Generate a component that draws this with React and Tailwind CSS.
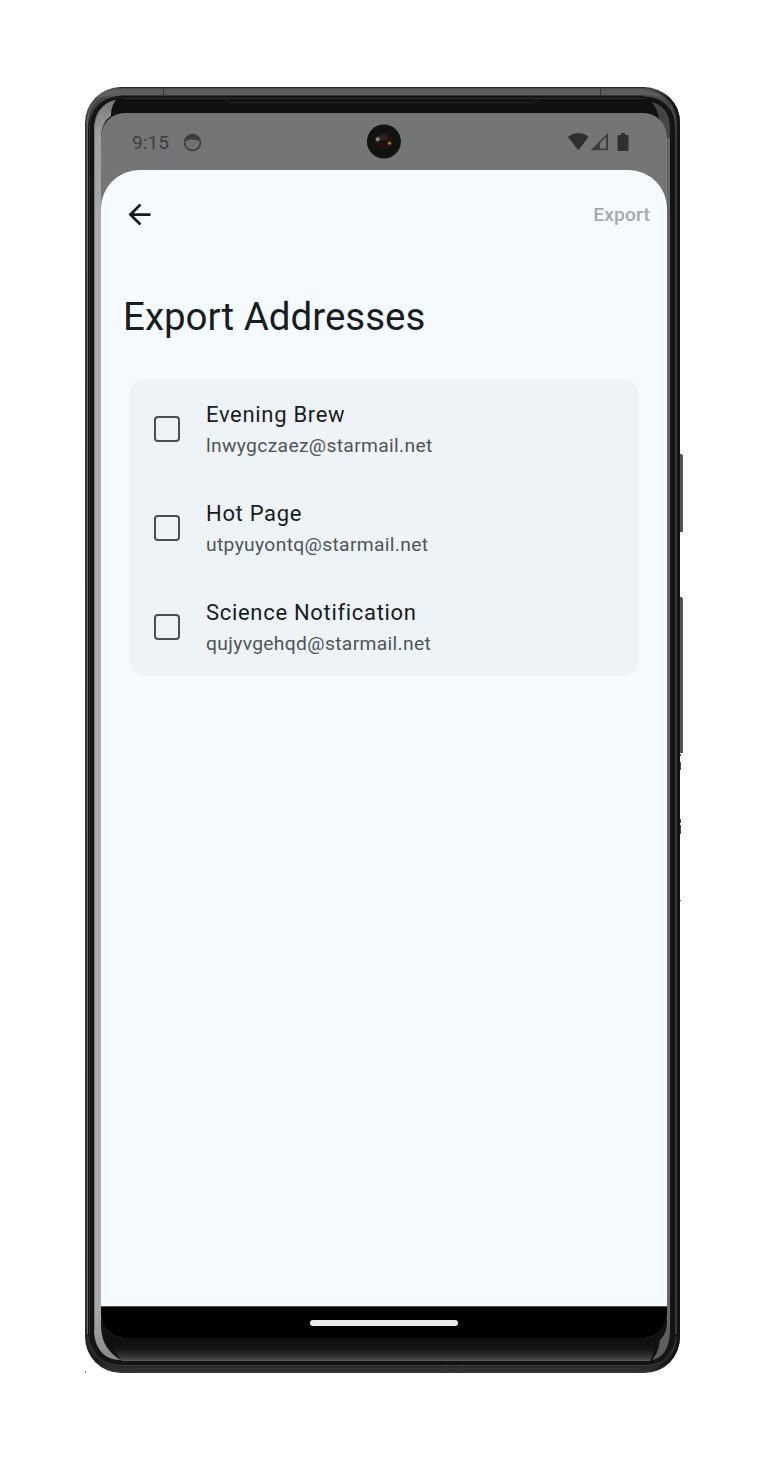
import React from 'react';

const addresses = [
  { name: 'Evening Brew', email: 'lnwygczaez@starmail.net' },
  { name: 'Hot Page', email: 'utpyuyontq@starmail.net' },
  { name: 'Science Notification', email: 'qujyvgehqd@starmail.net' },
];

function DeviceFrame() {
  return (
    <svg className="absolute inset-0" width="771" height="1464" viewBox="0 0 771 1464" fill="none" aria-hidden="true">
      <defs>
        <linearGradient id="rim" x1="0" y1="87" x2="0" y2="1373" gradientUnits="userSpaceOnUse">
          <stop offset="0" stopColor="#1b1b1b" />
          <stop offset="0.0016" stopColor="#5a5a5a" />
          <stop offset="0.006" stopColor="#5e5e5e" />
          <stop offset="0.009" stopColor="#484848" />
          <stop offset="0.03" stopColor="#3a3a3a" />
          <stop offset="0.96" stopColor="#303030" />
          <stop offset="0.99" stopColor="#1c1c1c" />
          <stop offset="1" stopColor="#353535" />
        </linearGradient>
        <linearGradient id="edge" x1="644" y1="0" x2="676" y2="0" gradientUnits="userSpaceOnUse">
          <stop offset="0" stopColor="#141414" stopOpacity="0" />
          <stop offset="1" stopColor="#141414" />
        </linearGradient>
        <linearGradient id="chin" x1="0" y1="1338" x2="0" y2="1361" gradientUnits="userSpaceOnUse">
          <stop offset="0" stopColor="#0d0d0d" />
          <stop offset="0.5" stopColor="#171717" />
          <stop offset="0.88" stopColor="#3b3b3b" />
          <stop offset="1" stopColor="#606060" />
        </linearGradient>
        <linearGradient id="shine" x1="0" y1="98" x2="0" y2="1361" gradientUnits="userSpaceOnUse">
          <stop offset="0" stopColor="#767676" />
          <stop offset="0.03" stopColor="#a0a0a0" />
          <stop offset="0.1" stopColor="#a9a9a9" />
          <stop offset="0.96" stopColor="#a9a9a9" />
          <stop offset="1" stopColor="#888" />
        </linearGradient>
      </defs>

      {/* Side buttons */}
      <path d="M679 454h3v78h-3zM679 597h3v156h-3z" fill="#555" />
      <path d="M682.3 455v77M682.3 598v155" stroke="#353535" />
      <path d="M680.5 754v2M680.5 762v8M680.5 819v4M680.5 825v9M680.5 900v1" stroke="#484848" />

      {/* Metal rim */}
      <rect x="85" y="87" width="595" height="1286" rx="36" fill="url(#rim)" />
      <path d="M644 1371.500c20 0 34.500-15 34.500-36V123c0-20-14-33-34.500-34" stroke="url(#edge)" strokeWidth="3" />
      <rect x="88" y="95.500" width="589" height="1269.500" rx="34" fill="#141414" />
      <path d="M87.500 1334V123c0-20 13-30 31-32" stroke="#6c6c6c" />
      <path d="M89.500 1334V128c0-20 12-31 31-31" stroke="#2c2c2c" />
      <path d="M676 1334V128c0-20-12-32-31-32" stroke="#484848" strokeWidth="1.500" />
      <path d="M88 1337c2 17 14 28.500 32 28.500h526c18 0 28-10 30-28" stroke="#3a3a3a" />
      <path d="M125 1368.500h514M130 1371.500h504" stroke="#343434" />
      <path d="M163.500 88v8M600.500 88v8M446.500 1364v8M462.500 1364v8" stroke="#353535" />

      {/* Reflective glass edge */}
      <rect x="94" y="98" width="576" height="1263" rx="30" fill="#111" />
      <path d="M101 140V1325c0 18 8 28 20 35-18 0-27-13-27-31V131c0-18 8-28 22-31-4 5-5 10-5 16-6 4-10 11-10 22z" fill="url(#shine)" />
      <path d="M94.500 1330V131c0-18 8-27 20-30.500" stroke="#777" />
      <path d="M667 1315v8c-1 10-3 13-7 17-1 9-4 16-8 20 12-2 18-14 18-30v-15z" fill="#5e5e5e" />
      <path d="M667 150v-12c-1-9-3-14-8-18-1-9-3-13-8-18 13 3 19 11 19 27v21z" fill="#454545" />
      <path d="M667 138h3v1188h-3z" fill="#666" />
      <path d="M118 1338h530c3 0 6-1 9-3-1 10-3 18-7 26H122c-7-8-11-16-12-27z" fill="url(#chin)" />
      <path d="M123 98.500h522" stroke="#303030" />
      <path d="M225 99.500l6 3h301l6-3" stroke="#282828" />
      <path d="M85.500 1371v2" stroke="#888" />
    </svg>
  );
}

function Camera() {
  return (
    <svg className="absolute left-[265px] top-[11px]" width="36" height="36" viewBox="0 0 36 36" aria-hidden="true">
      <defs>
        <radialGradient id="lens">
          <stop offset="0" stopColor="#150b0b" />
          <stop offset="0.65" stopColor="#24140f" />
          <stop offset="1" stopColor="#111311" />
        </radialGradient>
        <radialGradient id="glint">
          <stop offset="0" stopColor="#b9c9bc" />
          <stop offset="0.45" stopColor="#667267" />
          <stop offset="1" stopColor="#241818" stopOpacity="0" />
        </radialGradient>
        <radialGradient id="amber">
          <stop offset="0" stopColor="#f0aa58" />
          <stop offset="0.4" stopColor="#8a4d1c" />
          <stop offset="1" stopColor="#2b1710" stopOpacity="0" />
        </radialGradient>
      </defs>
      <circle cx="17.900" cy="17.500" r="17" fill="#111311" />
      <circle cx="18" cy="17" r="9" fill="url(#lens)" />
      <ellipse cx="17" cy="13.500" rx="4.500" ry="3" fill="#332022" />
      <circle cx="11.700" cy="15.200" r="3.400" fill="url(#glint)" />
      <circle cx="23.500" cy="19.300" r="3" fill="url(#amber)" />
    </svg>
  );
}

function StatusBar() {
  return (
    <div className="relative flex h-[57px] shrink-0 items-center pl-[31px] pr-[37px] text-[#3d3e40]">
      <span className="w-[38px] whitespace-nowrap pt-[2px] text-[19.25px] leading-6">9:15</span>
      <svg className="ml-[12.5px] mt-px" width="19" height="19" viewBox="0 0 19 19" fill="none" aria-hidden="true">
        <circle cx="9.500" cy="9.500" r="7.900" stroke="currentColor" strokeWidth="1.800" />
        <path d="M2 7C3.500 2.500 7 1 9.500 1s6 1.500 7.500 6l-2.700 1-1-1.600-1.300.6-1.300-.6-1.200.5-1.200-.6-1.200.7-1.100-.4-1.200 1.400z" fill="currentColor" />
        <path d="M6 9.500h1.500M11.500 9.500H13M6.500 12.500l1 .6M9 13h1.200M12.500 12.500l-1 .6" stroke="currentColor" strokeOpacity="0.7" />
      </svg>
      <Camera />
      <svg className="ml-auto" width="62" height="20" viewBox="0 0 62 20" fill="none" aria-hidden="true">
        <path d="M0 5.100C3 2.400 6.400 1.100 10.300 1.100s7.400 1.300 10.300 4L10.300 18.200z" fill="#2e2f31" />
        <path d="M22.500 18.200L40 1.100v17.100z" fill="#3d3e40" />
        <path d="M32 11l6-5.800v11.200h-6z" fill="#747577" />
        <path d="M50.600 2.900h2.500V1.100h4.100v1.800h2.300q1 0 1 1v14.200q0 1-1 1h-8.900q-1 0-1-1V3.900q0-1 1-1z" fill="#2e2f31" />
      </svg>
    </div>
  );
}

function AddressRow({ name, email }) {
  return (
    <label className="flex h-[99px] items-center pl-[25px]">
      <input type="checkbox" aria-label={name} className="size-[26px] shrink-0 appearance-none rounded-[4px] border-2 border-[#465053] bg-transparent" />
      <span className="ml-[26px] flex flex-col pt-[3px]">
        <span className="text-[22px] leading-[32px] tracking-[0.69px] text-[#171d1e]">{name}</span>
        <span className="text-[19.25px] leading-[30px] tracking-[0.34px] text-[#4d5557]">{email}</span>
      </span>
    </label>
  );
}

export default function App() {
  return (
    <div className="relative h-[1464px] w-[771px] overflow-hidden bg-white pl-[101px] pt-[113px] font-['Roboto',sans-serif]">
      <DeviceFrame />
      <div className="relative flex h-[1225px] w-[566px] flex-col overflow-hidden rounded-[24px] bg-[#747577]">
        <StatusBar />
        <main className="flex h-[1136px] flex-col rounded-t-[38.5px] bg-[#f5faff]">
          <header className="flex h-[88px] shrink-0 items-center justify-between pl-[22px] pr-[17px]">
            <button type="button" aria-label="Back" className="flex size-[33px] items-center justify-center text-[#171d1e]">
              <svg width="33" height="33" viewBox="0 0 24 24" fill="currentColor" aria-hidden="true">
                <path d="M7.825 13l5.600 5.600L12 20l-8-8 8-8 1.425 1.400L7.825 11H20v2z" />
              </svg>
            </button>
            <button type="button" disabled className="pt-[2px] text-[19.25px] font-medium leading-7 tracking-[0.14px] text-[#a3a9ab]">Export</button>
          </header>
          <h1 className="ml-[22px] mt-[34px] text-[38.5px] font-normal leading-[50px] text-[#171d1e]">Export Addresses</h1>
          <section className="ml-[28px] mt-[37px] w-[510px] rounded-[16px] bg-[#eef3f7]">
            {addresses.map((item) => (
              <AddressRow key={item.email} {...item} />
            ))}
          </section>
        </main>
        <nav className="flex h-[32px] shrink-0 items-start justify-center border-t border-[#555] bg-black pt-[13px]">
          <div className="h-[6px] w-[148px] rounded-full bg-[#ebebeb]" />
        </nav>
      </div>
    </div>
  );
}
